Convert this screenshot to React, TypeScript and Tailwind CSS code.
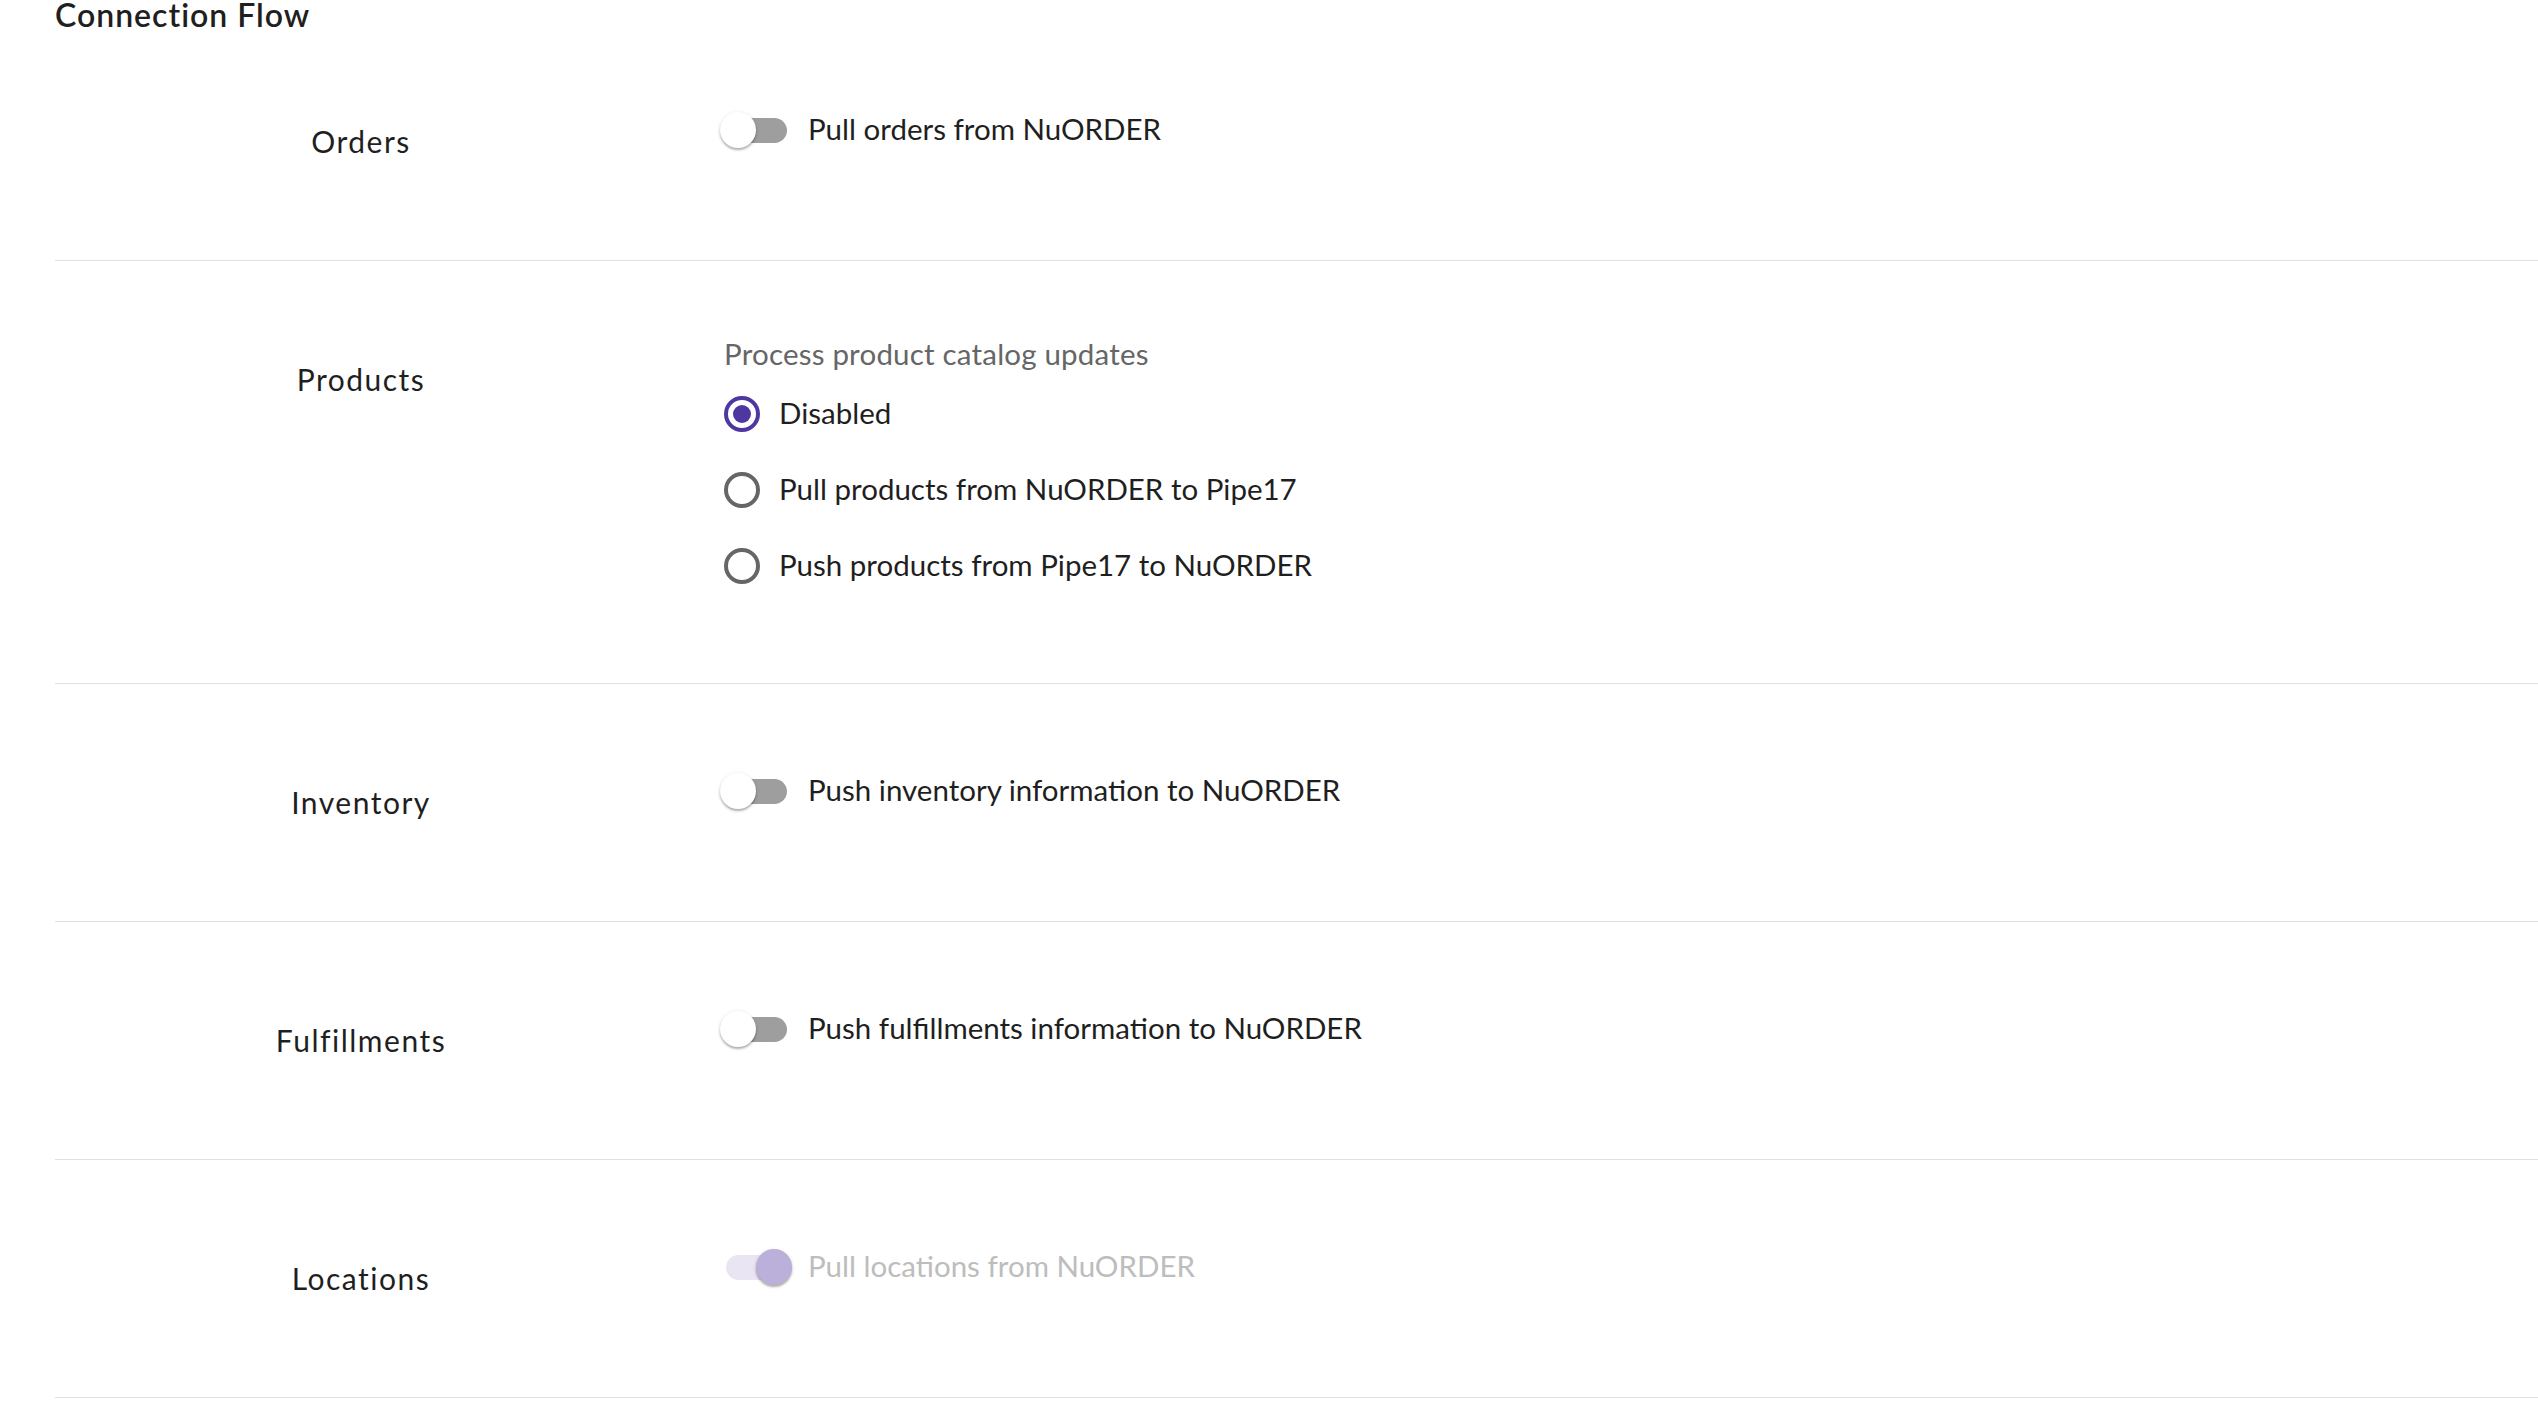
import React from "react";

const FONT = { fontFamily: "Lato, 'Noto Sans', sans-serif" };

function Toggle({ disabledOn = false }: { disabledOn?: boolean }) {
  if (disabledOn) {
    return (
      <span className="relative inline-block w-[104px] h-[68px] shrink-0">
        <span className="absolute left-[22px] top-[22px] w-[61px] h-[25px] rounded-full bg-[#e9e5f3]" />
        <span className="absolute left-[52px] top-[16px] w-[36px] h-[36px] rounded-full bg-[#bab0d9] shadow-[0_2px_2px_rgba(0,0,0,0.25),0_1px_4px_rgba(0,0,0,0.12)]" />
      </span>
    );
  }
  return (
    <span className="relative inline-block w-[104px] h-[68px] shrink-0">
      <span className="absolute left-[22px] top-[22px] w-[61px] h-[25px] rounded-full bg-[#9e9e9e]" />
      <span className="absolute left-[16px] top-[16px] w-[36px] h-[36px] rounded-full bg-white shadow-[0_2px_2px_rgba(0,0,0,0.25),0_1px_4px_rgba(0,0,0,0.12)]" />
    </span>
  );
}

function Radio({ checked }: { checked?: boolean }) {
  return (
    <span className="inline-flex w-[75px] h-[76px] items-center justify-center shrink-0">
      {checked ? (
        <span className="w-[36px] h-[36px] rounded-full border-[4px] border-[#4f37a1] flex items-center justify-center">
          <span className="w-[18px] h-[18px] rounded-full bg-[#4f37a1]" />
        </span>
      ) : (
        <span className="w-[36px] h-[36px] rounded-full border-[4px] border-[#666666]" />
      )}
    </span>
  );
}

function Row({ label, children }: { label: string; children: React.ReactNode }) {
  return (
    <div className="flex border-b border-[#e0e0e0] min-h-[238px]">
      <div className="w-[612px] shrink-0 pt-[97px] text-center text-[30px] leading-[42px] tracking-[1.5px] text-[#1f1f1f]">
        {label}
      </div>
      <div className="ml-[37px] pt-[73px] pb-[79px] flex flex-col">{children}</div>
    </div>
  );
}

function ToggleLine({ text, disabled = false }: { text: string; disabled?: boolean }) {
  return (
    <label className="flex items-center">
      <Toggle disabledOn={disabled} />
      <span className={"text-[29.5px] leading-[40px] pb-[3px] " + (disabled ? "text-[#bdbdbd]" : "text-[#1f1f1f]")}>{text}</span>
    </label>
  );
}

export default function App() {
  return (
    <div className="w-[2538px] h-[1402px] bg-white overflow-hidden" style={FONT}>
      <div className="pl-[55px]">
        <div className="h-[23px] text-[32px] leading-[30px] font-semibold tracking-[1px] text-[#1f1f1f]">Connection Flow</div>
        <Row label="Orders">
          <ToggleLine text="Pull orders from NuORDER" />
        </Row>
        <Row label="Products">
          <div className="ml-[20px] h-[42px] text-[29.5px] leading-[40px] tracking-[0.2px] text-[#666666]">Process product catalog updates</div>
          {[
            ["Disabled", true],
            ["Pull products from NuORDER to Pipe17", false],
            ["Push products from Pipe17 to NuORDER", false],
          ].map(([t, c]) => (
            <label key={t as string} className="flex items-center">
              <Radio checked={c as boolean} />
              <span className="text-[29.5px] leading-[40px] pb-[3px] text-[#1f1f1f]">{t as string}</span>
            </label>
          ))}
        </Row>
        <Row label="Inventory">
          <ToggleLine text="Push inventory information to NuORDER" />
        </Row>
        <Row label="Fulfillments">
          <ToggleLine text="Push fulfillments information to NuORDER" />
        </Row>
        <Row label="Locations">
          <ToggleLine text="Pull locations from NuORDER" disabled />
        </Row>
      </div>
    </div>
  );
}
